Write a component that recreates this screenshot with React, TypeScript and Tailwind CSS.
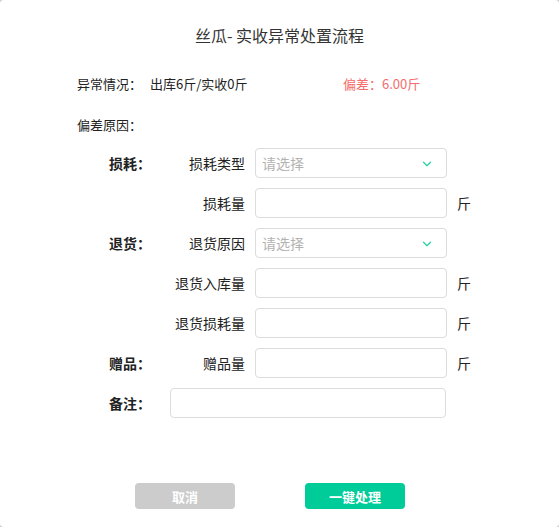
import { ChevronDown } from 'lucide-react';

const FONT = { fontFamily: '"Noto Sans CJK SC", "Noto Sans", sans-serif' };

type Row = {
  group?: string;
  label: string;
  kind: 'select' | 'input';
  unit?: boolean;
};

const ROWS: Row[] = [
  { group: '损耗：', label: '损耗类型', kind: 'select' },
  { label: '损耗量', kind: 'input', unit: true },
  { group: '退货：', label: '退货原因', kind: 'select' },
  { label: '退货入库量', kind: 'input', unit: true },
  { label: '退货损耗量', kind: 'input', unit: true },
  { group: '赠品：', label: '赠品量', kind: 'input', unit: true },
];

function Field({ row }: { row: Row }) {
  return (
    <div className="flex items-center h-[30px] text-[14px]">
      <div className="w-[60px] font-bold text-[#222]">{row.group}</div>
      <div className="w-[76px] text-right text-[#222]">{row.label}</div>
      <div className="ml-[10px] w-[192px] h-[30px] rounded-[4px] border border-[#dcdcdc] bg-white flex items-center justify-between pl-[6px] pr-[6px]">
        {row.kind === 'select' && (
          <>
            <span className="text-[#b3b3b3]">请选择</span>
            <ChevronDown className="w-[14px] h-[14px] text-[#1fd3a3] mr-[6px] mt-[2px]" strokeWidth={2} />
          </>
        )}
      </div>
      {row.unit && <span className="ml-[10px] text-[#222]">斤</span>}
    </div>
  );
}

export default function App() {
  return (
    <div className="bg-[#d0d0d0] w-[559px] h-[527px]" style={FONT}>
      <div className="w-full h-full bg-white rounded-[4px] flex flex-col text-[13px] leading-none">
        <h1 className="text-center text-[16px] text-[#333] pt-[27px] h-[43px]">丝瓜- 实收异常处置流程</h1>

        <div className="flex items-center mt-[33px] pl-[77px] h-[14px]">
          <span className="w-[73px] text-[#222]">异常情况：</span>
          <span className="w-[193px] text-[#222]">出库6斤/实收0斤</span>
          <span className="text-[#f56c6c]">偏差：6.00斤</span>
        </div>

        <div className="mt-[28px] pl-[77px] h-[14px] text-[#222]">偏差原因：</div>

        <div className="mt-[16px] pl-[109px] flex flex-col gap-[10px]">
          {ROWS.map((r, i) => (
            <Field key={i} row={r} />
          ))}
          <div className="flex items-center h-[30px] text-[14px]">
            <div className="w-[61px] font-bold text-[#222]">备注：</div>
            <div className="w-[276px] h-[30px] rounded-[4px] border border-[#dcdcdc] bg-white" />
          </div>
        </div>

        <div className="mt-[65px] pl-[135px] flex gap-[70px]">
          <button
            type="button"
            className="w-[100px] h-[26px] rounded-[4px] bg-[#cccccc] text-white font-bold text-[13px]"
          >
            取消
          </button>
          <button
            type="button"
            className="w-[100px] h-[26px] rounded-[4px] bg-[#00cc99] text-white font-bold text-[13px]"
          >
            一键处理
          </button>
        </div>
      </div>
    </div>
  );
}
